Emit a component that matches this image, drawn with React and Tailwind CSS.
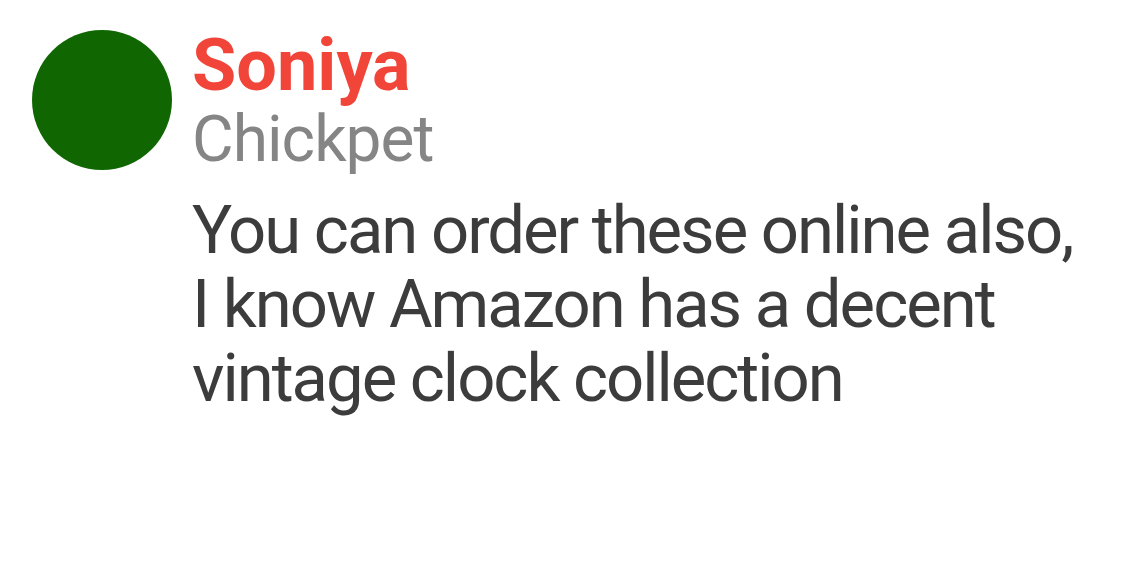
import React from "react";

const comment = {
  name: "Soniya",
  place: "Chickpet",
  text: "You can order these online also, I know Amazon has a decent vintage clock collection",
};

export default function App() {
  return (
    <div className="min-h-screen bg-white" style={{ fontFamily: "Roboto, sans-serif" }}>
      <div className="flex items-start gap-5 pl-8 pt-[30px]">
        {/* avatar */}
        <div className="w-[140px] h-[140px] shrink-0 rounded-full bg-[#106600]" />

        <div className="flex flex-col w-[895px]">
          <div className="text-[72px] leading-[72px] font-bold text-[#f2453a]">
            {comment.name}
          </div>
          <div className="text-[64px] leading-[76px] tracking-[-0.015em] text-[#858585]">
            {comment.place}
          </div>
          <p className="mt-[15px] text-[67px] leading-[74px] tracking-[-0.03em] text-[#3d3c3d]">
            {comment.text}
          </p>
        </div>
      </div>
    </div>
  );
}
